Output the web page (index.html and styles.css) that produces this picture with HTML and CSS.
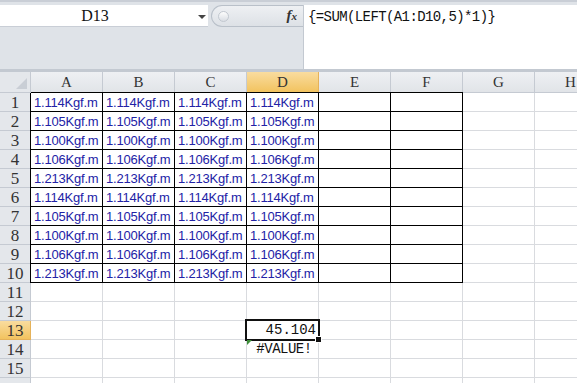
FILE: index.html
```html
<!DOCTYPE html>
<html lang="zh-Hant">
<head>
  <meta charset="UTF-8">
  <title>Excel - D13</title>
  <link rel="stylesheet" href="styles.css">
</head>
<body>
  <div class="formula-bar">
    <div class="name-row">
      <div class="name-box">
        <span class="name">D13</span>
        <span class="arrow"></span>
      </div>
      <div class="pill">
        <span class="knob"></span>
        <span class="fx">f<span class="x">x</span></span>
      </div>
    </div>
    <div class="formula">{=SUM(LEFT(A1:D10,5)*1)}</div>
  </div>

  <div class="sheet" id="sheet"></div>

  <script>
    const cols = ['A', 'B', 'C', 'D', 'E', 'F', 'G', 'H'];
    const values = ['1.114', '1.105', '1.100', '1.106', '1.213',
                    '1.114', '1.105', '1.100', '1.106', '1.213'];
    const sheet = document.getElementById('sheet');
    let html = '<div class="corner"><span class="tri"></span></div>';

    cols.forEach(function (c) {
      html += '<div class="col-head' + (c === 'D' ? ' active' : '') + '">' + c + '</div>';
    });

    // row 16 only peeks in at the bottom edge, its number is not visible
    for (let r = 1; r <= 16; r++) {
      html += '<div class="row-head' + (r === 13 ? ' active' : '') + '">' + (r < 16 ? r : '') + '</div>';
      cols.forEach(function (c, i) {
        let cls = 'cell';
        let text = '';
        if (r <= 10 && i < 6) {
          cls += ' boxed';
          if (r === 1) cls += ' top';
          if (i === 0) cls += ' left';
          if (i < 4) text = values[r - 1] + 'Kgf.m';
        }
        if (r === 13 && c === 'D') {
          cls += ' selected num';
          text = '45.104';
        }
        if (r === 14 && c === 'D') {
          cls += ' error';
          text = '#VALUE!';
        }
        html += '<div class="' + cls + '">' + text + '</div>';
      });
    }
    sheet.innerHTML = html;
  </script>
</body>
</html>
```

FILE: styles.css
```css
body {
  margin: 0;
  width: 577px;
  height: 383px;
  overflow: hidden;
  background: #fff;
  font-family: "Liberation Sans", Arial, sans-serif;
}

/* formula bar */
.formula-bar {
  display: flex;
  height: 72px;
  box-sizing: border-box;
  padding-top: 3px;
  background: #dfe3e8;
  border-top: 2px solid #c9ced6;
  border-bottom: 3px solid #c3c9d1;
}
.name-row {
  display: flex;
  width: 303px;
  height: 22px;
}
.name-box {
  position: relative;
  width: 208px;
  background: #fff;
  border-bottom: 1px solid #c9ced6;
}
.name {
  display: block;
  width: 190px;
  text-align: center;
  font-family: "Liberation Serif", serif;
  font-size: 16px;
  line-height: 22px;
  color: #111;
}
.arrow {
  position: absolute;
  left: 198px;
  top: 10px;
  border-left: 4px solid transparent;
  border-right: 4px solid transparent;
  border-top: 4px solid #444;
}
.pill {
  position: relative;
  flex: 1;
  margin-left: 3px;
  border: 1px solid #b9c0c9;
  border-right: none;
  border-radius: 12px 0 0 12px;
  background: linear-gradient(#eef0f3, #dde1e6);
}
.knob {
  position: absolute;
  left: 6px;
  top: 5px;
  width: 9px;
  height: 9px;
  border-radius: 50%;
  border: 1px solid #c2c8d0;
  background: linear-gradient(#fdfdfd, #dadee4);
}
.fx {
  position: absolute;
  right: 6px;
  top: 1px;
  font-family: "Liberation Serif", serif;
  font-style: italic;
  font-weight: bold;
  font-size: 15px;
  color: #333;
}
.fx .x {
  font-size: 11px;
}
.formula {
  flex: 1;
  background: #fff;
  border-left: 1px solid #c3c9d1;
  padding: 1px 0 0 4px;
  font-family: "Liberation Mono", monospace;
  font-size: 14px;
  letter-spacing: -0.6px;
  line-height: 22px;
  color: #111;
}

/* grid */
.sheet {
  display: grid;
  grid-template-columns: 31px repeat(8, 72px);
  grid-template-rows: 21px;
  grid-auto-rows: 19px;
  overflow: hidden;
}
.sheet > div {
  box-sizing: border-box;
  border-right: 1px solid #d9dbdf;
  border-bottom: 1px solid #d9dbdf;
  white-space: nowrap;
  overflow: hidden;
}
.corner {
  position: relative;
  background: #e4e7eb;
  border-color: #c5cad2 !important;
}
.tri {
  position: absolute;
  right: 3px;
  bottom: 3px;
  border-left: 11px solid transparent;
  border-bottom: 11px solid #c9ced5;
}
.col-head {
  background: linear-gradient(#eef0f3, #e1e4e8);
  border-color: #c5cad2 !important;
  text-align: center;
  font-family: "Liberation Serif", serif;
  font-size: 15px;
  line-height: 21px;
  color: #333;
}
.row-head {
  background: #e4e7eb;
  border-color: #c5cad2 !important;
  text-align: center;
  font-family: "Liberation Serif", serif;
  font-size: 17px;
  line-height: 19px;
  color: #333;
}
.col-head.active,
.row-head.active {
  background: linear-gradient(#f9dc9f, #f2c35f);
  border-color: #e5b25a !important;
}
.cell {
  padding-left: 3px;
  font-size: 13px;
  letter-spacing: -0.2px;
  line-height: 19px;
  color: #2222a6;
}
.cell.boxed {
  border-color: #000;
}
.cell.top {
  box-shadow: 0 -1px 0 #000;
}
.cell.left {
  box-shadow: -1px 0 0 #000;
}
.cell.top.left {
  box-shadow: 0 -1px 0 #000, -1px 0 0 #000, -1px -1px 0 #000;
}
.cell.selected {
  position: relative;
  overflow: visible;
}
.cell.selected::before {
  content: "";
  position: absolute;
  left: -2px;
  top: -2px;
  right: -2px;
  bottom: -2px;
  border: 2px solid #111;
}
.cell.selected::after {
  content: "";
  position: absolute;
  right: -4px;
  bottom: -4px;
  width: 5px;
  height: 5px;
  background: #111;
  border: 1px solid #fff;
  z-index: 1;
}
.cell.num {
  text-align: right;
  padding-right: 2px;
  font-family: "Liberation Mono", monospace;
  font-size: 14px;
  letter-spacing: 0;
  color: #111;
}
.cell.error {
  position: relative;
  text-align: center;
  font-family: "Liberation Mono", monospace;
  font-size: 14px;
  letter-spacing: -0.5px;
  color: #111;
}
.cell.error::before {
  content: "";
  position: absolute;
  left: 0;
  top: 0;
  border-top: 5px solid #3f8f3a;
  border-right: 5px solid transparent;
}
```
